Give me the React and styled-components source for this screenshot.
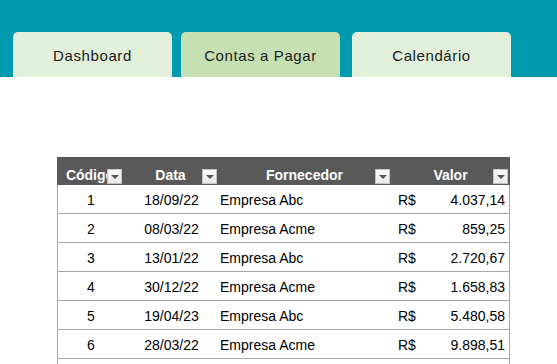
import React from "react";
import styled, { createGlobalStyle } from "styled-components";

const Global = createGlobalStyle`
  html, body { margin: 0; padding: 0; background: #ffffff; }
  body { font-family: "Liberation Sans", Arial, sans-serif; }
`;

const Page = styled.div`
  width: 557px;
  height: 364px;
  overflow: hidden;
  background: #ffffff;
`;

const TopBar = styled.div`
  height: 77px;
  background: #009aae;
  display: flex;
  align-items: flex-end;
  padding-left: 13px;
  box-sizing: border-box;
`;

const Tab = styled.div`
  width: 159px;
  height: 45px;
  margin-left: ${(p) => p.$gap || 0}px;
  background: ${(p) => (p.$active ? "#c6e0b4" : "#e2efda")};
  border-radius: 5px 5px 0 0;
  display: flex;
  align-items: center;
  justify-content: center;
  padding-top: 1px;
  box-sizing: border-box;
  font-family: "Liberation Sans", Arial, sans-serif;
  font-size: 15px;
  letter-spacing: 0.6px;
  color: #1a1a1a;
`;

const TableWrap = styled.div`
  margin: 80px 0 0 57px;
  width: 453px;
  font-family: "Liberation Sans", Arial, sans-serif;
`;

const cols = "66px 95px 173px 119px";

const HeadRow = styled.div`
  display: grid;
  grid-template-columns: ${cols};
  height: 28px;
  background: #595959;
`;

const HeadCell = styled.div`
  position: relative;
  display: flex;
  align-items: flex-end;
  justify-content: center;
  padding-bottom: 2px;
  box-sizing: border-box;
  color: #ffffff;
  font-weight: bold;
  font-size: 14px;
  overflow: hidden;
  white-space: nowrap;
`;

const Filter = styled.span`
  position: absolute;
  right: ${(p) => p.$right ?? 1}px;
  bottom: 1px;
  width: 15px;
  height: 15px;
  box-sizing: border-box;
  border: 1px solid #c4c4c4;
  background: linear-gradient(#fafafa, #e8eaec);
  display: flex;
  align-items: center;
  justify-content: center;
  &::after {
    content: "";
    width: 0;
    height: 0;
    border-left: 4px solid transparent;
    border-right: 4px solid transparent;
    border-top: 4px solid #555555;
    margin-top: 1px;
  }
`;

const Row = styled.div`
  display: grid;
  grid-template-columns: ${cols};
  height: 29px;
  box-sizing: border-box;
  border-left: 1px solid #a6a6a6;
  border-right: 1px solid #a6a6a6;
  border-bottom: 1px solid #a6a6a6;
  font-size: 14px;
  color: #000000;
`;

const Cell = styled.div`
  display: flex;
  align-items: center;
  justify-content: ${(p) => p.$align || "flex-start"};
  padding-left: ${(p) => p.$pl || 0}px;
  padding-top: 1px;
  box-sizing: border-box;
  white-space: nowrap;
`;

const MoneyCell = styled.div`
  display: flex;
  align-items: center;
  justify-content: space-between;
  padding: 1px 6px 0 6px;
  box-sizing: border-box;
`;

const data = [
  ["1", "18/09/22", "Empresa Abc", "4.037,14"],
  ["2", "08/03/22", "Empresa Acme", "859,25"],
  ["3", "13/01/22", "Empresa Abc", "2.720,67"],
  ["4", "30/12/22", "Empresa Acme", "1.658,83"],
  ["5", "19/04/23", "Empresa Abc", "5.480,58"],
  ["6", "28/03/22", "Empresa Acme", "9.898,51"],
  ["", "", "", ""],
];

export default function App() {
  return (
    <Page>
      <Global />
      <TopBar>
        <Tab>Dashboard</Tab>
        <Tab $active $gap={9}>Contas a Pagar</Tab>
        <Tab $gap={12}>Calendário</Tab>
      </TopBar>
      <TableWrap>
        <HeadRow>
          <HeadCell>
            Código
            <Filter />
          </HeadCell>
          <HeadCell>
            Data
            <Filter />
          </HeadCell>
          <HeadCell>
            Fornecedor
            <Filter />
          </HeadCell>
          <HeadCell>
            Valor
            <Filter $right={2} />
          </HeadCell>
        </HeadRow>
        {data.map((r, i) => (
          <Row key={i}>
            <Cell $align="center">{r[0]}</Cell>
            <Cell $align="center">{r[1]}</Cell>
            <Cell $pl={1}>{r[2]}</Cell>
            <MoneyCell>
              {r[3] ? (
                <>
                  <span>R$</span>
                  <span>{r[3]}</span>
                </>
              ) : null}
            </MoneyCell>
          </Row>
        ))}
      </TableWrap>
    </Page>
  );
}
